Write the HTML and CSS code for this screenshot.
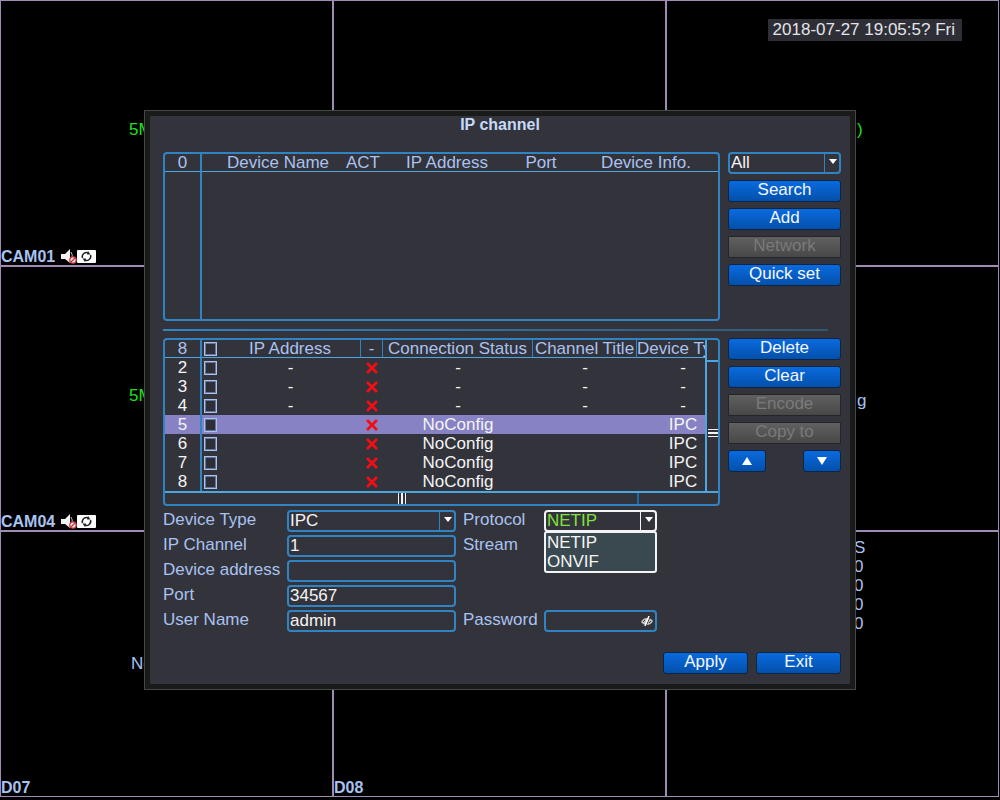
FILE: index.html
```html
<!DOCTYPE html>
<html lang="en">
<head>
    <meta charset="UTF-8">
    <meta name="viewport" content="width=device-width, initial-scale=1.0">
    <title>IP channel</title>
    <link rel="stylesheet" href="styles.css">
</head>
<body>
    <!-- shared icons -->
    <svg class="sprite" aria-hidden="true">
        <symbol id="icon-mute" viewBox="0 0 16 15">
            <path d="M0 5h4l5-5v14l-5-4H0z" fill="#f2f2f2"/>
            <path d="M10 3q2 3 1 6" fill="none" stroke="#bbb" stroke-width="1"/>
            <circle cx="12" cy="11" r="3.2" fill="#eee" stroke="#c8323c" stroke-width="1.3"/>
            <path d="M10 13l4-4" stroke="#c8323c" stroke-width="1.3"/>
        </symbol>
        <symbol id="icon-sync" viewBox="0 0 19 13">
            <rect width="19" height="13" rx="1" fill="#fff"/>
            <path d="M5.500 8a4.200 4.200 0 0 1 6-5M13.500 5a4.200 4.200 0 0 1-6 5" fill="none" stroke="#222" stroke-width="1.500"/>
            <path d="M11 1l2.500 3.500-3.500 0zM8 12l-2.500-3.500 3.500 0z" fill="#222"/>
        </symbol>
        <symbol id="icon-cross" viewBox="0 0 12 12">
            <path d="M1 1l10 10M11 1L1 11" stroke="#f50d14" stroke-width="2.800"/>
        </symbol>
    </svg>

    <div class="wall">
        <div class="camera">
            <span class="osd osd-mode">5M-N</span>
            <div class="name">CAM01 <svg class="mute"><use href="#icon-mute"/></svg><svg class="sync"><use href="#icon-sync"/></svg></div>
        </div>
        <div class="camera"></div>
        <div class="camera">
            <time class="clock">2018-07-27 19:05:5? Fri</time>
            <span class="osd osd-end">)</span>
        </div>
        <div class="camera">
            <span class="osd osd-mode">5M-N</span>
            <div class="name">CAM04 <svg class="mute"><use href="#icon-mute"/></svg><svg class="sync"><use href="#icon-sync"/></svg></div>
        </div>
        <div class="camera"></div>
        <div class="camera"><span class="osd osd-config">g</span></div>
        <div class="camera">
            <span class="osd osd-none">No</span>
            <div class="name">D07</div>
        </div>
        <div class="camera"><div class="name">D08</div></div>
        <div class="camera">
            <div class="osd osd-rate">S<br>0<br>0<br>0<br>0</div>
        </div>
    </div>

    <div class="overlay">
        <form class="dialog">
            <h1>IP channel</h1>

            <div class="section">
                <div class="box found">
                    <table class="found-table">
                        <colgroup>
                            <col class="c-num"><col class="c-name"><col class="c-act"><col class="c-ip"><col class="c-port"><col>
                        </colgroup>
                        <thead>
                            <tr>
                                <th>0</th>
                                <th class="indent">Device Name</th>
                                <th>ACT</th>
                                <th>IP Address</th>
                                <th>Port</th>
                                <th>Device Info.</th>
                            </tr>
                        </thead>
                        <tbody>
                            <tr><td></td><td colspan="5"></td></tr>
                        </tbody>
                    </table>
                </div>
                <div class="actions">
                    <span class="select">
                        <select aria-label="Filter"><option>All</option></select>
                    </span>
                    <button type="button">Search</button>
                    <button type="button">Add</button>
                    <button type="button" disabled>Network</button>
                    <button type="button">Quick set</button>
                </div>
            </div>

            <hr>

            <div class="section">
                <div class="box added">
                    <div class="viewport">
                        <table class="added-table">
                            <colgroup>
                                <col class="a-num"><col class="a-check"><col class="a-ip"><col class="a-state"><col class="a-status"><col class="a-title"><col class="a-type">
                            </colgroup>
                            <thead>
                                <tr>
                                    <th>8</th>
                                    <th><input type="checkbox" aria-label="Select all"></th>
                                    <th>IP Address</th>
                                    <th>-</th>
                                    <th>Connection Status</th>
                                    <th>Channel Title</th>
                                    <th>Device Type</th>
                                </tr>
                            </thead>
                            <tbody>
                                <tr>
                                    <td>2</td>
                                    <td><input type="checkbox" aria-label="Channel 2"></td>
                                    <td>-</td>
                                    <td><svg class="cross"><use href="#icon-cross"/></svg></td>
                                    <td>-</td>
                                    <td>-</td>
                                    <td>-</td>
                                </tr>
                                <tr>
                                    <td>3</td>
                                    <td><input type="checkbox" aria-label="Channel 3"></td>
                                    <td>-</td>
                                    <td><svg class="cross"><use href="#icon-cross"/></svg></td>
                                    <td>-</td>
                                    <td>-</td>
                                    <td>-</td>
                                </tr>
                                <tr>
                                    <td>4</td>
                                    <td><input type="checkbox" aria-label="Channel 4"></td>
                                    <td>-</td>
                                    <td><svg class="cross"><use href="#icon-cross"/></svg></td>
                                    <td>-</td>
                                    <td>-</td>
                                    <td>-</td>
                                </tr>
                                <tr class="selected">
                                    <td>5</td>
                                    <td><input type="checkbox" aria-label="Channel 5"></td>
                                    <td></td>
                                    <td><svg class="cross"><use href="#icon-cross"/></svg></td>
                                    <td>NoConfig</td>
                                    <td></td>
                                    <td>IPC</td>
                                </tr>
                                <tr>
                                    <td>6</td>
                                    <td><input type="checkbox" aria-label="Channel 6"></td>
                                    <td></td>
                                    <td><svg class="cross"><use href="#icon-cross"/></svg></td>
                                    <td>NoConfig</td>
                                    <td></td>
                                    <td>IPC</td>
                                </tr>
                                <tr>
                                    <td>7</td>
                                    <td><input type="checkbox" aria-label="Channel 7"></td>
                                    <td></td>
                                    <td><svg class="cross"><use href="#icon-cross"/></svg></td>
                                    <td>NoConfig</td>
                                    <td></td>
                                    <td>IPC</td>
                                </tr>
                                <tr>
                                    <td>8</td>
                                    <td><input type="checkbox" aria-label="Channel 8"></td>
                                    <td></td>
                                    <td><svg class="cross"><use href="#icon-cross"/></svg></td>
                                    <td>NoConfig</td>
                                    <td></td>
                                    <td>IPC</td>
                                </tr>
                            </tbody>
                        </table>
                    </div>
                    <div class="vscroll"><div class="thumb"><i></i><i></i><i></i></div></div>
                    <div class="hscroll"><div class="thumb"><i></i><i></i><i></i></div></div>
                </div>
                <div class="actions">
                    <button type="button">Delete</button>
                    <button type="button">Clear</button>
                    <button type="button" disabled>Encode</button>
                    <button type="button" disabled>Copy to</button>
                    <div class="arrows">
                        <button type="button" aria-label="Up"><svg viewBox="0 0 10 8"><path d="M5 0l5 8H0z"/></svg></button>
                        <button type="button" aria-label="Down"><svg viewBox="0 0 10 8"><path d="M0 0h10L5 8z"/></svg></button>
                    </div>
                </div>
            </div>

            <div class="fields">
                <label for="type">Device Type</label>
                <span class="select">
                    <select id="type"><option>IPC</option></select>
                </span>
                <label class="second" for="protocol">Protocol</label>
                <span class="select open">
                    <select id="protocol"><option>NETIP</option><option>ONVIF</option></select>
                    <ul class="menu" role="listbox">
                        <li role="option">NETIP</li>
                        <li role="option">ONVIF</li>
                    </ul>
                </span>

                <label for="channel">IP Channel</label>
                <input type="text" id="channel" value="1">
                <span class="second">Stream</span>
                <span></span>

                <label for="address">Device address</label>
                <input type="text" id="address">
                <span></span>
                <span></span>

                <label for="port">Port</label>
                <input type="text" id="port" value="34567">
                <span></span>
                <span></span>

                <label for="user">User Name</label>
                <input type="text" id="user" value="admin">
                <label class="second" for="password">Password</label>
                <span class="password">
                    <input type="password" id="password">
                    <svg class="eye" viewBox="0 0 12 10">
                        <path d="M0 6q2-4 6-4 4 0 6 3-2 4-6 4-4 0-6-3z" fill="#c4c4c4"/>
                        <path d="M2 6l2-2M8 7l2-2" stroke="#33333b" stroke-width="1"/>
                        <path d="M5 10l4-9" stroke="#33333b" stroke-width="1"/>
                        <path d="M4 10l4-10" stroke="#fff" stroke-width="1.500"/>
                    </svg>
                </span>
            </div>

            <div class="footer">
                <button type="button">Apply</button>
                <button type="button">Exit</button>
            </div>
        </form>
    </div>
</body>
</html>
```

FILE: styles.css
```css
:root {
    --line: #3184c4;
    --line-light: #4ba6e2;
    --grid: #a18bb4;
    --panel: #33333b;
    --label: #a9c2f0;
    --text: #f4f4f4;
}

* {
    margin: 0;
    padding: 0;
    box-sizing: border-box;
}

body {
    position: relative;
    display: flex;
    min-height: 100vh;
    background-color: #000;
    color: var(--text);
    font-family: "Liberation Sans", Arial, sans-serif;
    font-size: 17px;
    line-height: 19px;
}

.sprite {
    position: absolute;
    width: 0;
    height: 0;
}

/* camera wall */
.wall {
    flex: 1;
    display: grid;
    grid-template-columns: repeat(3, 1fr);
    grid-template-rows: repeat(3, 1fr);
    gap: 2px;
    margin: 0 1px 3px 0;
    padding: 1px;
    background-color: var(--grid);
}

.camera {
    position: relative;
    display: flex;
    align-items: flex-end;
    background-color: #000;
}

.name {
    display: flex;
    align-items: center;
    color: var(--label);
    font-size: 16px;
    font-weight: bold;
    line-height: 17px;
}

.mute {
    width: 16px;
    height: 15px;
    margin-left: 6px;
}

.sync {
    width: 19px;
    height: 13px;
}

.clock {
    position: absolute;
    top: 18px;
    right: 36px;
    padding: 1px 7px 2px 5px;
    background-color: #2e2e37;
    color: #e4e4e8;
}

.osd {
    position: absolute;
    color: var(--label);
}

.osd-mode,
.osd-end {
    top: 119px;
    color: #1fe01f;
}

.osd-mode {
    left: 128px;
}

.osd-end {
    left: 190px;
}

.osd-config {
    top: 124px;
    left: 190px;
}

.osd-none {
    top: 122px;
    left: 130px;
}

.osd-rate {
    top: 6px;
    left: 187px;
}

/* dialog */
.overlay {
    position: absolute;
    inset: 0;
    display: grid;
    place-items: center;
}

.dialog {
    width: 100%;
    max-width: 712px;
    padding: 3px 14px 15px 18px;
    border: 1px solid #454747;
    background-color: var(--panel);
    box-shadow: inset 0 0 0 5px #191b1b;
}

h1 {
    margin: 0 4px 16px 0;
    color: #c6dafa;
    font-size: 16px;
    line-height: 22px;
    text-align: center;
}

hr {
    height: 2px;
    margin: 8px 13px 7px 0;
    border: none;
    background: linear-gradient(to right, #3184c4, #355670);
}

.section {
    display: flex;
    gap: 8px;
}

.box {
    flex: 1;
    min-width: 0;
    border: 2px solid var(--line);
    border-radius: 4px;
    overflow: hidden;
}

.actions {
    display: flex;
    flex-direction: column;
    gap: 6px;
    width: 113px;
}

table {
    table-layout: fixed;
    border-collapse: separate;
    border-spacing: 0;
}

th,
td {
    text-align: center;
    white-space: nowrap;
}

th {
    height: 18px;
    border-bottom: 1px solid var(--line-light);
    color: var(--label);
    font-weight: normal;
    line-height: 17px;
}

th:first-child,
td:first-child {
    border-right: 2px solid var(--line);
}

.found-table {
    width: 100%;
    height: 165px;
}

.c-num { width: 37px; }
.c-name { width: 138px; }
.c-act { width: 46px; }
.c-ip { width: 122px; }
.c-port { width: 66px; }

.indent {
    padding-left: 14px;
}

.added {
    display: grid;
    grid-template-columns: 1fr 13px;
    grid-template-rows: 151px 13px;
}

.viewport {
    overflow: hidden;
}

.added-table {
    width: 564px;
}

.a-num { width: 37px; }
.a-check { width: 18px; }
.a-ip { width: 141px; }
.a-state { width: 22px; }
.a-status { width: 150px; }
.a-title { width: 104px; }
.a-type { width: 92px; }

.added-table th:nth-child(n+3) {
    border-right: 1px solid var(--line);
}

.added-table td {
    height: 19px;
    line-height: 18px;
}

.selected {
    background-color: #8782c4;
}

.cross {
    display: block;
    width: 12px;
    height: 12px;
    margin: 0 auto;
}

input[type="checkbox"] {
    appearance: none;
    display: block;
    width: 13px;
    height: 14px;
    margin-left: 2px;
    border: 1px solid #a9c2f0;
    background-color: #2e2e36;
    box-shadow: inset 0 0 0 1px #66759a;
}

/* scroll bars */
.vscroll {
    padding-top: 20px;
    border-left: 2px solid var(--line-light);
}

.hscroll {
    grid-column: 1 / -1;
    border-top: 2px solid var(--line-light);
}

.thumb {
    display: flex;
    align-items: center;
    justify-content: center;
    gap: 2px;
    height: 100%;
}

.vscroll .thumb {
    flex-direction: column;
    padding-top: 12px;
    border-top: 2px solid var(--line-light);
}

.hscroll .thumb {
    width: 474px;
    padding-left: 2px;
    border-right: 2px solid #1c68a8;
}

.thumb i {
    background-color: #f4f4f4;
}

.vscroll i {
    width: 10px;
    height: 1px;
}

.hscroll i {
    width: 1px;
    height: 11px;
}

.vscroll i:nth-child(2) {
    height: 2px;
}

.hscroll i:nth-child(2) {
    width: 2px;
}

/* controls */
button {
    height: 22px;
    padding-bottom: 2px;
    border: 1px solid #0b2547;
    border-radius: 3px;
    background: linear-gradient(#0a6ade, #0350ab);
    color: #f4f8ff;
    font: inherit;
    line-height: 18px;
    cursor: pointer;
}

button:disabled {
    border-color: #24242a;
    border-radius: 1px;
    background: linear-gradient(#606060, #484848);
    color: #7a7a7a;
    cursor: default;
}

.arrows {
    display: flex;
    justify-content: space-between;
}

.arrows button {
    display: flex;
    align-items: center;
    justify-content: center;
    width: 38px;
    padding: 0;
}

.arrows svg {
    width: 10px;
    height: 8px;
    fill: #fff;
}

.fields {
    display: grid;
    grid-template-columns: 124px 169px 88px 113px;
    gap: 3px 0;
    margin-top: 4px;
    line-height: 20px;
    color: var(--label);
}

.second {
    padding-left: 7px;
}

select,
input[type="text"],
input[type="password"] {
    appearance: none;
    display: block;
    width: 100%;
    height: 22px;
    padding: 0 1px;
    border: 2px solid var(--line);
    border-radius: 4px;
    background-color: transparent;
    color: var(--text);
    font: inherit;
    line-height: 18px;
    outline: none;
}

.select,
.password {
    position: relative;
    display: block;
}

.select::before {
    content: "";
    position: absolute;
    top: 2px;
    right: 2px;
    width: 14px;
    height: 18px;
    border-left: 1px solid var(--line);
    pointer-events: none;
}

.select::after {
    content: "";
    position: absolute;
    top: 7px;
    right: 4px;
    border: 4px solid transparent;
    border-top: 5px solid #fff;
    border-bottom: none;
    pointer-events: none;
}

.open select {
    border-color: #f4f4f4;
    color: #7fe03c;
}

.open::before {
    border-color: #f4f4f4;
}

.menu {
    position: absolute;
    top: 21px;
    left: 0;
    width: 100%;
    padding: 0 1px;
    border: 2px solid #f4f4f4;
    border-radius: 3px;
    background-color: #3a4950;
    color: var(--text);
    line-height: 19px;
    list-style: none;
}

.eye {
    position: absolute;
    top: 6px;
    right: 4px;
    width: 12px;
    height: 10px;
}

.footer {
    display: flex;
    justify-content: flex-end;
    gap: 8px;
    margin-top: 20px;
}

.footer button {
    width: 85px;
}
```
